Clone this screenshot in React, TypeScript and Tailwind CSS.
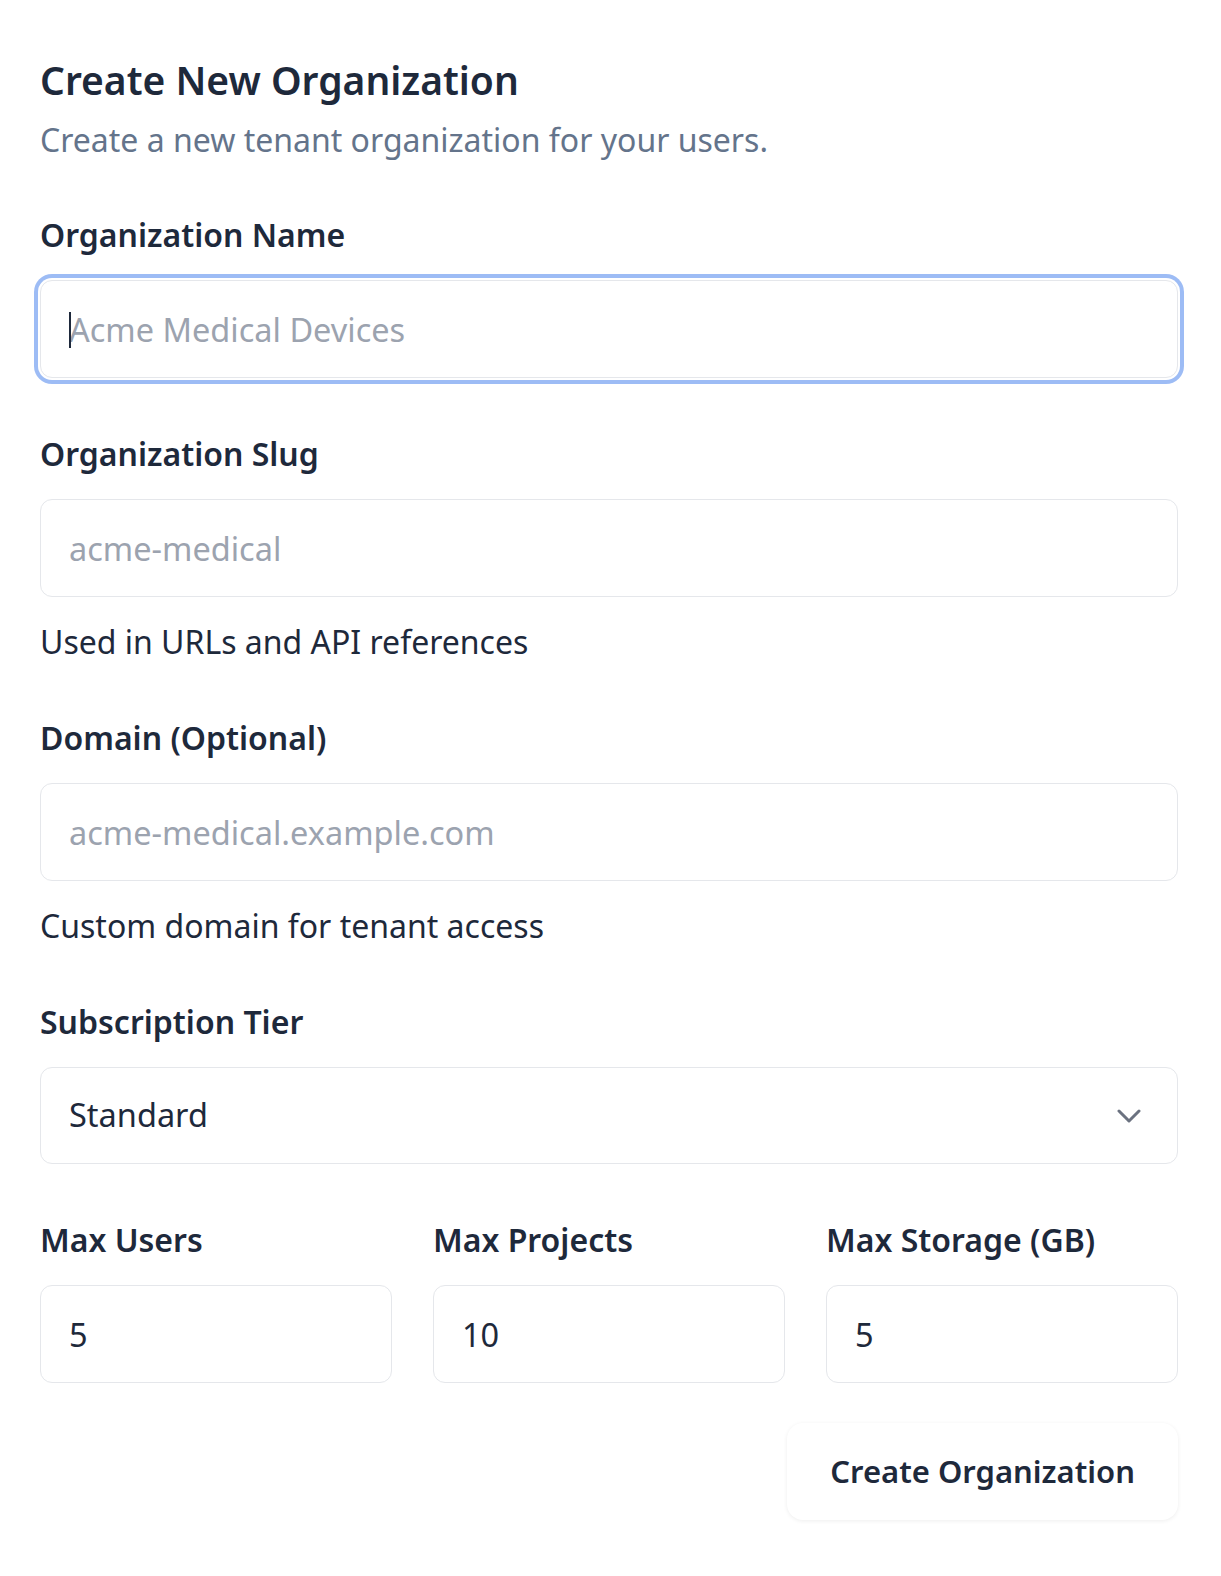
export default function App() {
  const label = "block text-[32px] font-semibold leading-[40px] text-[#1e293b] mb-[25px]";
  const input =
    "block w-full h-[98px] rounded-xl border border-[#e5e7eb] bg-white px-7 text-[32.5px] text-[#1e293b] placeholder:text-[#9ca3af] outline-none";
  const help = "mt-[25px] text-[32px] leading-[40px] text-[#1e293b]";

  return (
    <div className="min-h-screen bg-white pl-10 pr-[43px] pt-[52px] pb-16 font-['Noto_Sans',sans-serif]">
      <h1 className="text-[39px] font-semibold leading-[56px] text-[#1e293b]">Create New Organization</h1>
      <p className="mt-2 text-[32px] leading-[48px] text-[#64748b]">
        Create a new tenant organization for your users.
      </p>

      <form className="mt-[51px] flex flex-col gap-[56px]" onSubmit={(e) => e.preventDefault()}>
        {/* name, focused */}
        <div>
          <label className={label}>Organization Name</label>
          <div className="relative">
            <input
              className={input + " ring-4 ring-[#9dbcf5] ring-offset-2"}
              placeholder="Acme Medical Devices"
            />
            <span className="absolute left-[29px] top-[32px] h-[36px] w-[2px] bg-[#1e293b]" />
          </div>
        </div>

        <div>
          <label className={label}>Organization Slug</label>
          <input className={input} placeholder="acme-medical" />
          <p className={help}>Used in URLs and API references</p>
        </div>

        <div>
          <label className={label}>Domain (Optional)</label>
          <input className={input} placeholder="acme-medical.example.com" />
          <p className={help}>Custom domain for tenant access</p>
        </div>

        <div>
          <label className={label}>Subscription Tier</label>
          <div className="flex h-[97px] items-center justify-between rounded-xl border border-[#e5e7eb] bg-white pl-7 pr-9 text-[32.5px] text-[#1e293b]">
            <span>Standard</span>
            <svg width="24" height="14" viewBox="0 0 24 14" fill="none" stroke="#6b7280" strokeWidth="3" strokeLinecap="round" strokeLinejoin="round">
              <path d="M2 2l10 10L22 2" />
            </svg>
          </div>
        </div>

        <div className="grid grid-cols-3 gap-[41px]">
          {[
            ["Max Users", "5"],
            ["Max Projects", "10"],
            ["Max Storage (GB)", "5"],
          ].map(([name, value]) => (
            <div key={name}>
              <label className={label}>{name}</label>
              <input className={input} defaultValue={value} />
            </div>
          ))}
        </div>
      </form>

      <div className="mt-10 flex justify-end">
        <button className="h-[97px] rounded-2xl bg-white px-[43px] text-[31px] font-semibold text-[#1e293b] shadow-[0_1px_4px_rgba(0,0,0,0.07)]">
          Create Organization
        </button>
      </div>
    </div>
  );
}
